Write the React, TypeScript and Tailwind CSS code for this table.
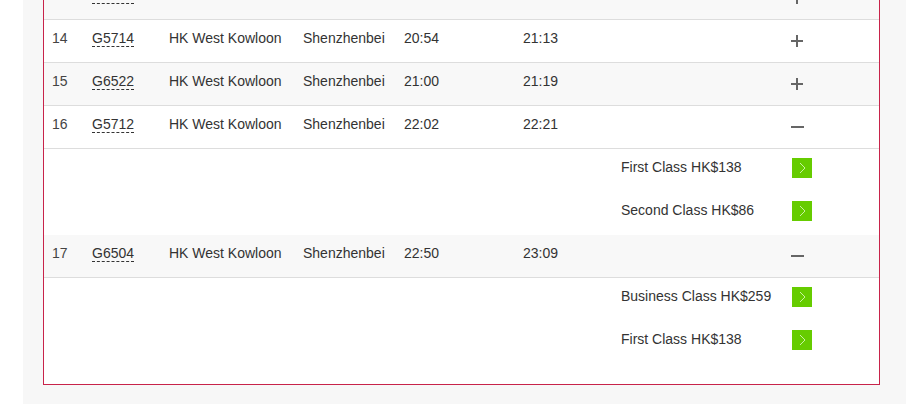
import React from "react";

type Fare = { name: string; price: string };
type Train = {
  no: number;
  code: string;
  from: string;
  to: string;
  dep: string;
  arr: string;
  open?: boolean;
  fares?: Fare[];
};

const trains: Train[] = [
  { no: 13, code: "G5716", from: "HK West Kowloon", to: "Shenzhenbei", dep: "20:30", arr: "20:49" },
  { no: 14, code: "G5714", from: "HK West Kowloon", to: "Shenzhenbei", dep: "20:54", arr: "21:13" },
  { no: 15, code: "G6522", from: "HK West Kowloon", to: "Shenzhenbei", dep: "21:00", arr: "21:19" },
  {
    no: 16,
    code: "G5712",
    from: "HK West Kowloon",
    to: "Shenzhenbei",
    dep: "22:02",
    arr: "22:21",
    open: true,
    fares: [
      { name: "First Class", price: "HK$138" },
      { name: "Second Class", price: "HK$86" },
    ],
  },
  {
    no: 17,
    code: "G6504",
    from: "HK West Kowloon",
    to: "Shenzhenbei",
    dep: "22:50",
    arr: "23:09",
    open: true,
    fares: [
      { name: "Business Class", price: "HK$259" },
      { name: "First Class", price: "HK$138" },
    ],
  },
];

const cols = "grid grid-cols-[40px_77px_134px_101px_119px_98px_171px_1fr]";

const PlusIcon = () => (
  <svg width="12" height="12" viewBox="0 0 12 12" className="block">
    <rect x="0" y="5" width="12" height="2" fill="#666" />
    <rect x="5" y="0" width="2" height="12" fill="#666" />
  </svg>
);

const MinusIcon = () => (
  <svg width="13" height="2" viewBox="0 0 13 2" className="block">
    <rect x="0" y="0" width="13" height="2" fill="#666" />
  </svg>
);

const GoButton = () => (
  <div className="w-5 h-5 bg-[#66cc00] flex items-center justify-center">
    <svg width="20" height="20" viewBox="0 0 20 20">
      <polyline points="8,5 13,10 8,15" fill="none" stroke="#c9f2a4" strokeWidth="1" />
    </svg>
  </div>
);

const TrainRow = ({ t, shaded }: { t: Train; shaded: boolean }) => (
  <div className={`${cols} h-[43px] border-b border-[#dddddd] ${shaded ? "bg-[#f8f8f8]" : "bg-white"}`}>
    <div className="pl-2 pt-2 text-[#444]">{t.no}</div>
    <div className="pl-2 pt-2">
      <span className="border-b border-dashed border-[#333]">{t.code}</span>
    </div>
    <div className="pl-2 pt-2">{t.from}</div>
    <div className="pl-2 pt-2">{t.to}</div>
    <div className="pl-2 pt-2">{t.dep}</div>
    <div className="pl-2 pt-2">{t.arr}</div>
    <div />
    <div className="pl-[7px] flex items-center">
      {t.open ? <MinusIcon /> : <PlusIcon />}
    </div>
  </div>
);

const FareRow = ({ f }: { f: Fare }) => (
  <div className={`${cols} h-[43px] bg-white`}>
    <div />
    <div />
    <div />
    <div />
    <div />
    <div />
    <div className="pl-2 pt-2">
      {f.name} {f.price}
    </div>
    <div className="pl-2 pt-[9px]">
      <GoButton />
    </div>
  </div>
);

export default function App() {
  return (
    <div className="w-[913px] h-[404px] overflow-hidden bg-white font-['Liberation_Sans',Arial,sans-serif] text-[14px] leading-5 text-[#333]">
      <div className="ml-[23px] w-[883px] h-full flex flex-col bg-[#f7f7f7] pl-5 pr-[26px]">
        <div className="-mt-[24px] border border-[#c8234a] bg-white pb-5">
          {trains.map((t, i) => (
            <React.Fragment key={t.no}>
              <TrainRow t={t} shaded={i % 2 === 0} />
              {t.open && t.fares?.map((f) => <FareRow key={f.name} f={f} />)}
            </React.Fragment>
          ))}
        </div>
      </div>
    </div>
  );
}
